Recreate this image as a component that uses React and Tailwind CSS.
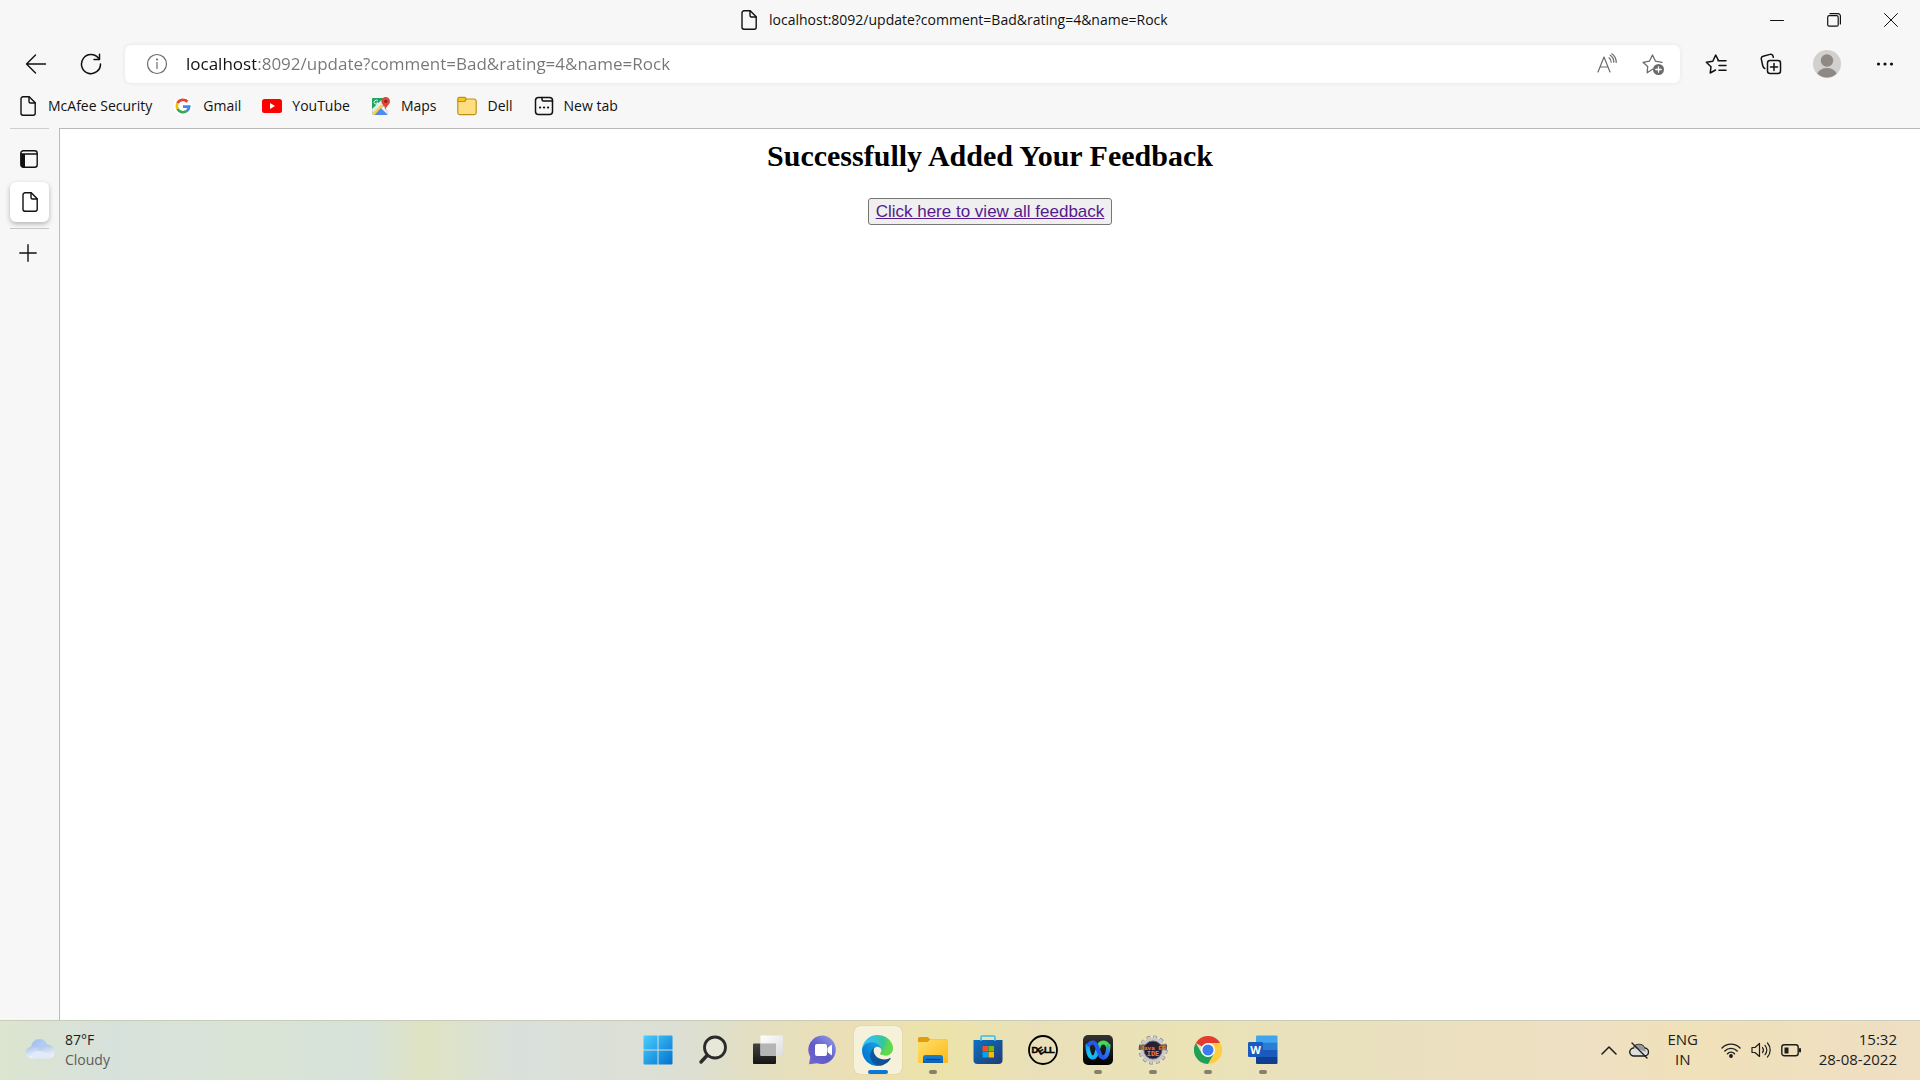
const icon = {
  fill: "none",
  stroke: "currentColor",
  strokeLinecap: "round",
  strokeLinejoin: "round",
  "aria-hidden": true,
};

function PageIcon({ className = "" }) {
  return (
    <svg {...icon} viewBox="0 0 20 20" strokeWidth="1.4" className={"h-5 w-5 shrink-0 " + className}>
      <path d="M5 .8h6.2l6 6V17.200a2 2 0 0 1-2 2H5a2 2 0 0 1-2-2V2.800a2 2 0 0 1 2-2Z" />
      <path d="M11 1v4.500a1.500 1.500 0 0 0 1.500 1.500H17" />
    </svg>
  );
}

function BackIcon() {
  return (
    <svg {...icon} viewBox="0 0 22 22" strokeWidth="1.400" className="h-[22px] w-[22px]">
      <path d="M10.500 2 1.500 11l9 9M1.500 11H20.500" />
    </svg>
  );
}

function RefreshIcon() {
  return (
    <svg {...icon} viewBox="0 0 22 22" strokeWidth="1.500" className="h-[22px] w-[22px]">
      <path d="M20.500 11A9.500 9.500 0 1 1 18.600 5.400M19.500 1.200v5.300h-5.500" />
    </svg>
  );
}

function InfoIcon() {
  return (
    <svg {...icon} viewBox="0 0 22 22" strokeWidth="1.200" className="h-[22px] w-[22px]">
      <circle cx="11" cy="11" r="9.500" />
      <path d="M11 9.500v6" />
      <circle cx="11" cy="6.500" r=".5" fill="currentColor" />
    </svg>
  );
}

function ReadAloudIcon() {
  return (
    <svg {...icon} viewBox="0 0 22 22" strokeWidth="1.200" className="h-[22px] w-[22px]">
      <path d="M2 19 8 4l6 15M4 14h8M13 4.800c1.400 1 2.200 2.600 2.200 4.400M14.200 2.200c2.400 1.500 3.600 4 3.600 7M15.800.8c2.900 1.900 4.400 4.900 4.400 8.700" />
    </svg>
  );
}

const STAR = "M10.500 16.200 5.200 19.800 5.700 13.500 1 9.300 7.400 8.200 10.500 2 13.500 8.200 20 9.300";

function StarPlusIcon() {
  return (
    <svg {...icon} viewBox="0 0 22 22" strokeWidth="1.300" className="h-[22px] w-[22px] overflow-visible">
      <path d={STAR} />
      <circle cx="16.500" cy="16.500" r="5.500" fill="currentColor" stroke="none" />
      <path d="M16.500 13.800v5.400M13.800 16.500h5.400" stroke="#fff" />
    </svg>
  );
}

function FavoritesIcon() {
  return (
    <svg {...icon} viewBox="0 0 22 22" strokeWidth="1.500" className="h-[22px] w-[22px]">
      <path d="M10.500 17 5.200 20l.8-6.300L1.300 9.300l6.500-1L10.700 2l2.700 5.300M13 7.800h8M14 12.500h7M14 17.200h7" />
    </svg>
  );
}

function CollectionsIcon() {
  return (
    <svg {...icon} viewBox="0 0 22 22" strokeWidth="1.500" className="h-[22px] w-[22px]">
      <rect x="7.500" y="7.500" width="13" height="13" rx="2.500" />
      <path d="M14 10.500v7M10.500 14h7M4.800 15.500C3.500 15 3 14 2.700 12.500L1.300 6.200C1 4.800 1.700 3.700 3.200 3.300L10 1.400c1.500-.4 2.700.3 3 1.700l.3 1.200" />
    </svg>
  );
}

function AvatarIcon() {
  return (
    <svg viewBox="0 0 28 28" className="h-7 w-7" aria-hidden="true">
      <circle cx="14" cy="14" r="14" fill="#d2d0ce" />
      <circle cx="14" cy="10.500" r="6.200" fill="#8e8985" />
      <path d="M4.300 23.500C6 20 9.500 18 14 18s8 2 9.700 5.500A14 14 0 0 1 4.300 23.500Z" fill="#8e8985" />
    </svg>
  );
}

function GoogleIcon() {
  return (
    <svg viewBox="0 0 20 20" className="h-5 w-5" fill="none" strokeWidth="2.700" aria-hidden="true">
      <circle cx="10" cy="10" r="9.500" fill="#fff" />
      <path d="M14.500 5.700A6.200 6.200 0 0 0 4.500 7.200" stroke="#ea4335" />
      <path d="M4.500 7.200a6.200 6.200 0 0 0 0 5.600" stroke="#fbbc05" />
      <path d="M4.500 12.800a6.200 6.200 0 0 0 9.500 2" stroke="#34a853" />
      <path d="M13.900 14.900a6.200 6.200 0 0 0 2.300-4.300H10" stroke="#4285f4" />
    </svg>
  );
}

function YouTubeIcon() {
  return (
    <svg viewBox="0 0 20 20" className="h-5 w-5" aria-hidden="true">
      <rect y="3" width="20" height="14" rx="2.500" fill="#f00" />
      <path d="m8 7 5 3-5 3Z" fill="#fff" />
    </svg>
  );
}

function MapsIcon() {
  return (
    <svg viewBox="0 0 20 20" className="h-5 w-5" aria-hidden="true">
      <path d="M1 3a1 1 0 0 1 1-1h12v7L2 18.500a1 1 0 0 1-1-1Z" fill="#1fa463" />
      <path d="M1 13 10.500 4l3 4L1.500 19Z" fill="#e8eaed" />
      <path d="m1 17.500 9-9 2 2-7 8.500H2Z" fill="#fdd043" />
      <path d="m10 12 7 7H3.500Z" fill="#4d8bf5" />
      <path d="m12 10 5 4.500V19Z" fill="#dfe2e6" />
      <path d="M14.700 1a4.300 4.300 0 0 1 4.300 4.300c0 3.500-3.500 4-4.300 8.700-.8-4.700-4.300-5.200-4.300-8.700A4.300 4.300 0 0 1 14.700 1Z" fill="#e1443a" />
      <circle cx="14.700" cy="5.200" r="1.500" fill="#7d231e" />
      <path d="M6.800 5A2 2 0 1 0 7 7H5.300" fill="none" stroke="#fff" />
    </svg>
  );
}

function FolderMark() {
  return (
    <svg viewBox="0 0 20 20" className="h-5 w-5" stroke="#be9117" strokeWidth="1.200" aria-hidden="true">
      <path d="M.8 4v12.500a2.200 2.200 0 0 0 2.200 2.200h14a2.200 2.200 0 0 0 2.200-2.200V5.200A2.200 2.200 0 0 0 17 3h-7Z" fill="#ffde81" />
      <path d="M.8 5.500V3A1.700 1.700 0 0 1 2.500 1.300h5A1.500 1.500 0 0 1 9 2.500c0 1.500-.8 3-2.200 3Z" fill="#fcc41f" />
    </svg>
  );
}

function NewTabIcon() {
  return (
    <svg {...icon} viewBox="0 0 20 20" strokeWidth="1.500" className="h-5 w-5">
      <rect x="1.500" y="1.500" width="17" height="17" rx="3" />
      <path d="M8 1.500v2a1.500 1.500 0 0 0 1.500 1.500h9" />
      <path d="M6 11.500h.1M10 11.500h.1M14 11.500h.1" strokeWidth="2.200" />
    </svg>
  );
}

const bookmarks = [
  { name: "McAfee Security", Icon: PageIcon },
  { name: "Gmail", Icon: GoogleIcon },
  { name: "YouTube", Icon: YouTubeIcon },
  { name: "Maps", Icon: MapsIcon },
  { name: "Dell", Icon: FolderMark },
  { name: "New tab", Icon: NewTabIcon },
];

function TitleBar() {
  return (
    <header className="grid h-10 grid-cols-[1fr_auto_1fr] items-center">
      <span />
      <div className="flex min-w-[442px] items-center gap-2.5 text-sm">
        <PageIcon />
        <span>localhost:8092/update?comment=Bad&amp;rating=4&amp;name=Rock</span>
      </div>
      <div className="flex justify-end">
        <button aria-label="Minimize" className="flex h-10 w-[57px] items-center justify-center">
          <svg {...icon} viewBox="0 0 14 14" className="h-3.5 w-3.5"><path d="M.5 7.500h13" /></svg>
        </button>
        <button aria-label="Restore" className="flex h-10 w-[57px] items-center justify-center">
          <svg {...icon} viewBox="0 0 14 14" strokeWidth="1.200" className="h-3.5 w-3.5">
            <rect x=".7" y="2.700" width="10.500" height="10.500" rx="1.500" />
            <path d="M3 .7h8a2.400 2.400 0 0 1 2.400 2.400V11" />
          </svg>
        </button>
        <button aria-label="Close" className="flex h-10 w-[58px] items-center justify-center">
          <svg {...icon} viewBox="0 0 14 14" className="h-3.5 w-3.5"><path d="m.5.500 13 13M13.500.500l-13 13" /></svg>
        </button>
      </div>
    </header>
  );
}

function Toolbar() {
  const tool = "flex h-9 w-[55px] items-center justify-center";
  return (
    <div className="flex h-12 items-center pl-2">
      <button aria-label="Back" className={tool}><BackIcon /></button>
      <button aria-label="Refresh" className={tool}><RefreshIcon /></button>
      <div className="ml-[7px] mr-2 flex h-[38px] flex-1 items-center rounded-md bg-white pl-[21px] pr-4 text-[#6b6b6b] shadow-[0_0_5px_rgba(0,0,0,0.08)]">
        <button aria-label="Site information" className="mr-[18px]"><InfoIcon /></button>
        <input
          aria-label="Address"
          defaultValue="localhost:8092/update?comment=Bad&rating=4&name=Rock"
          className="min-w-0 flex-1 bg-[linear-gradient(90deg,#111_70px,#767676_70px)] bg-clip-text text-[17px] leading-7 text-transparent outline-none"
        />
        <div className="flex gap-6">
          <button aria-label="Read aloud"><ReadAloudIcon /></button>
          <button aria-label="Add to favorites"><StarPlusIcon /></button>
        </div>
      </div>
      <button aria-label="Favorites" className={tool}><FavoritesIcon /></button>
      <button aria-label="Collections" className={tool}><CollectionsIcon /></button>
      <button aria-label="Profile" className="flex h-9 w-[58px] items-center justify-center"><AvatarIcon /></button>
      <button aria-label="Settings and more" className="mr-1.5 flex h-9 w-[58px] items-center justify-center">
        <svg viewBox="0 0 18 18" className="h-[18px] w-[18px]" fill="currentColor" aria-hidden="true">
          <circle cx="2.500" cy="9" r="1.600" /><circle cx="9" cy="9" r="1.600" /><circle cx="15.500" cy="9" r="1.600" />
        </svg>
      </button>
    </div>
  );
}

function Bookmarks() {
  return (
    <nav aria-label="Bookmarks" className="flex h-10 items-center gap-[21px] px-[18px] pb-1 text-sm">
      {bookmarks.map(({ name, Icon }) => (
        <a key={name} href="#" className="flex items-center gap-2.5">
          <Icon />
          {name}
        </a>
      ))}
    </nav>
  );
}

function TabRail() {
  return (
    <aside className="flex w-[59px] shrink-0 flex-col items-start pl-2.5">
      <div className="h-px w-[39px] bg-[#cfcfcf]" />
      <button aria-label="Tab actions" className="mt-[11px] flex h-[38px] w-[39px] items-center justify-center pr-0.5">
        <svg {...icon} viewBox="0 0 18 18" strokeWidth="1.400" className="h-[18px] w-[18px]">
          <rect x=".8" y=".8" width="16.400" height="16.400" rx="2.500" />
          <path d="M1 4h16" />
          <path d="M1 4h4v13H3a2 2 0 0 1-2-2Z" fill="currentColor" stroke="none" />
        </svg>
      </button>
      <button aria-label="localhost:8092" className="mt-1 flex h-10 w-[39px] items-center justify-center rounded-md bg-white shadow-[0_2px_5px_rgba(0,0,0,0.28)]">
        <PageIcon />
      </button>
      <div className="mt-1.5 h-px w-[39px] bg-[#c8c8c8]" />
      <button aria-label="New tab" className="mt-[5px] flex h-[38px] w-[39px] items-center justify-center pr-1">
        <svg {...icon} viewBox="0 0 18 18" strokeWidth="1.400" className="h-[18px] w-[18px]"><path d="M9 .8v16.400M.8 9h16.400" /></svg>
      </button>
    </aside>
  );
}

function StartIcon() {
  return (
    <svg viewBox="0 0 30 30" className="h-[30px] w-[30px]" aria-hidden="true">
      <defs>
        <linearGradient id="start" gradientUnits="userSpaceOnUse" x1="0" y1="0" x2="30" y2="30">
          <stop stopColor="#4bd0ff" /><stop offset="1" stopColor="#0070cf" />
        </linearGradient>
      </defs>
      <path d="M.5 1.500a1 1 0 0 1 1-1H14.500v14H.5ZM15.500.5h13a1 1 0 0 1 1 1v13h-14ZM.5 15.500h14v14h-13a1 1 0 0 1-1-1ZM15.500 15.500h14v13a1 1 0 0 1-1 1h-13Z" fill="url(#start)" />
    </svg>
  );
}

function SearchIcon() {
  return (
    <svg viewBox="0 0 30 30" className="h-[30px] w-[30px]" fill="none" stroke="#2b2b2b" strokeLinecap="round" aria-hidden="true">
      <circle cx="17" cy="12.500" r="10.500" fill="#ffffff40" strokeWidth="2.800" />
      <path d="m9 20.500-6 6.500" strokeWidth="3.400" />
    </svg>
  );
}

function TaskViewIcon() {
  return (
    <svg viewBox="0 0 30 30" className="h-[30px] w-[30px]" aria-hidden="true">
      <defs>
        <linearGradient id="tvDark" x2="0" y2="1"><stop stopColor="#444" /><stop offset="1" stopColor="#151515" /></linearGradient>
        <linearGradient id="tvLight" x2="1" y2="1"><stop stopColor="#fff" /><stop offset="1" stopColor="#dcdcdc" /></linearGradient>
      </defs>
      <rect y="8.500" width="23" height="20.500" rx="1" fill="url(#tvDark)" />
      <rect x="7.500" y=".5" width="22.500" height="20.500" rx="1" fill="url(#tvLight)" />
      <path d="M7.500 8.500H23V21H8.500a1 1 0 0 1-1-1Z" fill="#b5b5b5" />
    </svg>
  );
}

function ChatIcon() {
  return (
    <svg viewBox="0 0 30 30" className="h-[30px] w-[30px]" aria-hidden="true">
      <defs>
        <linearGradient id="chat" x1="0" y1="1" x2=".8" y2="0"><stop stopColor="#7267cf" /><stop offset=".5" stopColor="#5f5bc4" /><stop offset="1" stopColor="#8c95e8" /></linearGradient>
      </defs>
      <path d="M15 .5A14.300 14.300 0 1 1 9 28.300L1 29.300l1.300-7.300A14.300 14.300 0 0 1 15 .5Z" fill="url(#chat)" />
      <rect x="7" y="9" width="12" height="12" rx="2" fill="#fff" />
      <path d="m20 13 3.500-2.800v9.600L20 17Z" fill="#fff" stroke="#fff" strokeLinejoin="round" />
    </svg>
  );
}

function EdgeIcon() {
  return (
    <svg viewBox="0 0 256 256" className="h-[31px] w-[31px]" aria-hidden="true">
      <defs>
        <linearGradient id="edgeA" x1="63" y1="178" x2="241" y2="178" gradientUnits="userSpaceOnUse"><stop stopColor="#0c59a4" /><stop offset="1" stopColor="#114a8b" /></linearGradient>
        <linearGradient id="edgeB" x1="157" y1="100" x2="46" y2="222" gradientUnits="userSpaceOnUse"><stop stopColor="#1b9de2" /><stop offset=".2" stopColor="#1595df" /><stop offset=".7" stopColor="#0680d7" /><stop offset="1" stopColor="#0078d4" /></linearGradient>
        <radialGradient id="edgeC" cx="26" cy="45" r="205" gradientUnits="userSpaceOnUse" gradientTransform="matrix(1 0 0 .8 0 10)"><stop stopColor="#35c1f1" /><stop offset=".4" stopColor="#34c1dd" /><stop offset=".75" stopColor="#36c793" /><stop offset="1" stopColor="#62d84c" /></radialGradient>
      </defs>
      <path fill="url(#edgeA)" d="M231 190.500c-3.400 1.800-6.900 3.400-10.500 4.700a101.900 101.900 0 0 1-35.900 6.400c-47.300 0-88.500-32.500-88.500-74.300a31.500 31.500 0 0 1 16.400-27.300c-42.800 1.800-53.800 46.400-53.800 72.500 0 74 68.100 81.400 82.800 81.400 7.900 0 19.800-2.300 27-4.600l1.300-.4a128.300 128.300 0 0 0 66.600-52.800 4 4 0 0 0-5.400-5.600Z" />
      <path fill="url(#edgeB)" d="M105.700 241.400a79.200 79.200 0 0 1-22.700-21.300 80.700 80.700 0 0 1 29.500-120c3.200-1.500 8.500-4.100 15.600-4a32.400 32.400 0 0 1 25.700 13 31.900 31.900 0 0 1 6.300 18.700c0-.2 24.500-79.600-80-79.600-43.900 0-80 41.700-80 78.200a130.200 130.200 0 0 0 12.100 56 128 128 0 0 0 156.400 67 75.600 75.600 0 0 1-62.800-8Z" />
      <path fill="url(#edgeC)" d="M152.300 148.900c-.8 1-3.300 2.500-3.300 5.600 0 2.600 1.700 5.100 4.700 7.200 14.400 10 41.500 8.700 41.600 8.700a59.600 59.600 0 0 0 30.300-8.300 61.400 61.400 0 0 0 30.400-52.900c.3-22.400-8-37.300-11.300-43.900C223.500 23.900 177.700 0 128 0A128 128 0 0 0 0 126.200c.5-36.500 36.800-66 80-66 3.500 0 23.500.3 42 10a72.600 72.600 0 0 1 30.900 29.300c6.100 10.600 7.200 24.100 7.200 29.500s-2.700 13.300-7.800 19.900Z" />
    </svg>
  );
}

function ExplorerIcon() {
  return (
    <svg viewBox="0 0 30 30" className="h-[30px] w-[30px]" aria-hidden="true">
      <defs>
        <linearGradient id="folder" x2="1" y2="1"><stop stopColor="#ffdf70" /><stop offset="1" stopColor="#fdb913" /></linearGradient>
        <linearGradient id="shelf" x2="0" y2="1"><stop stopColor="#1683d8" /><stop offset="1" stopColor="#0d5fab" /></linearGradient>
      </defs>
      <path d="M0 3.500a1.500 1.500 0 0 1 1.500-1.500h8l3 2.500H28.500A1.500 1.500 0 0 1 30 6v6H0Z" fill="#e39c0c" />
      <path d="M0 7h9.500l3-2.500h16A1.500 1.500 0 0 1 30 6v21a1 1 0 0 1-1 1H1a1 1 0 0 1-1-1Z" fill="url(#folder)" />
      <path d="M5 28v-5.500a2.500 2.500 0 0 1 2.500-2.500h15a2.500 2.500 0 0 1 2.500 2.500V28Z" fill="url(#shelf)" />
      <path d="M8.500 24.500h13" stroke="#0b3f7a" strokeLinecap="round" />
    </svg>
  );
}

function StoreIcon() {
  return (
    <svg viewBox="0 0 30 30" className="h-[30px] w-[30px]" aria-hidden="true">
      <defs><linearGradient id="store" x2="1" y2="1"><stop stopColor="#0b72c4" /><stop offset="1" stopColor="#223a72" /></linearGradient></defs>
      <path d="M.5 5h29v20a4 4 0 0 1-4 4h-21a4 4 0 0 1-4-4Z" fill="url(#store)" />
      <path d="M8 6V2.500A1.500 1.500 0 0 1 9.500 1h11A1.500 1.500 0 0 1 22 2.500V6" fill="none" stroke="#2fc0f5" strokeWidth="1.600" />
      <path d="M9.500 11H15v5.500H9.500Z" fill="#f25022" /><path d="M15.500 11H21v5.500h-5.500Z" fill="#7fba00" />
      <path d="M9.500 17H15v5.500H9.500Z" fill="#00a4ef" /><path d="M15.500 17H21v5.500h-5.500Z" fill="#ffb900" />
    </svg>
  );
}

function DellIcon() {
  return (
    <svg viewBox="0 0 30 30" className="h-[30px] w-[30px]" aria-hidden="true">
      <circle cx="15" cy="15" r="14" fill="none" stroke="#000" strokeWidth="1.800" />
      <g fontFamily="Liberation Sans, sans-serif" fontWeight="700" fontSize="9.500" stroke="#000" strokeWidth=".4">
        <text x="3.500 12.300 16 21" y="18.300 20.300 18.300 18.300" rotate="0 -35 0 0">DELL</text>
      </g>
    </svg>
  );
}

function WebexIcon() {
  return (
    <svg viewBox="0 0 30 30" className="h-[30px] w-[30px]" aria-hidden="true">
      <defs>
        <linearGradient id="wxA" gradientUnits="userSpaceOnUse" x1="4" y1="10" x2="15" y2="22"><stop stopColor="#1b8fe8" /><stop offset=".5" stopColor="#14c8ee" /><stop offset="1" stopColor="#20a1f3" /></linearGradient>
        <linearGradient id="wxB" gradientUnits="userSpaceOnUse" x1="16" y1="22" x2="26" y2="9"><stop stopColor="#2557f0" /><stop offset=".6" stopColor="#2c7af0" /><stop offset="1" stopColor="#35d44e" /></linearGradient>
        <linearGradient id="wxBg" x2="0" y2="1"><stop stopColor="#343434" /><stop offset="1" stopColor="#000" /></linearGradient>
      </defs>
      <rect width="30" height="30" rx="5" fill="url(#wxBg)" />
      <g fill="none" strokeWidth="4.200" strokeLinecap="round">
        <path d="M15 13C16 9.500 17.500 7.500 20 7.500c2.500 0 4 1 4.500 3" stroke="#42db51" />
        <path d="M4.500 10.500C5 18 7 22.500 10 22.500c3 0 4-6 5.500-10.500" stroke="url(#wxA)" />
        <path d="M20 22.500c3 0 5-4 5.500-12" stroke="url(#wxB)" />
        <path d="M6 9.500c1-1.500 2.500-2 4-2 5 0 5.500 15 10 15" stroke="#2459f0" />
      </g>
    </svg>
  );
}

function EclipseIcon() {
  return (
    <svg viewBox="0 0 30 30" className="h-[30px] w-[30px]" aria-hidden="true">
      <circle cx="15" cy="15" r="12.500" fill="none" stroke="#7d7d7d" strokeWidth="4" strokeDasharray="3.400 3.145" />
      <circle cx="15" cy="15" r="12.300" fill="none" stroke="#cfcfcf" strokeWidth="3.200" strokeDasharray="2.600 3.840" strokeDashoffset="-.4" />
      <circle cx="15" cy="15" r="10.500" fill="#28223c" stroke="#c9c9c9" strokeWidth="3" />
      <circle cx="15" cy="15" r="9" fill="#251e3d" stroke="#656575" />
      <rect x="1" y="9.500" width="28" height="5.500" fill="#352021" opacity=".6" />
      <g fill="#f0802b" fontFamily="Liberation Mono, monospace" fontWeight="700" textAnchor="middle">
        <text x="15" y="14.500" fontSize="6">Java EE</text>
        <text x="15" y="21" fontSize="7">IDE</text>
      </g>
    </svg>
  );
}

function ChromeIcon() {
  return (
    <svg viewBox="0 0 48 48" className="h-7 w-7" aria-hidden="true">
      <path d="M24 24 3.200 12A24 24 0 0 1 44.800 12Z" fill="#e33b2e" />
      <path d="M24 12h20.800A24 24 0 0 1 24 48l10.400-18Z" fill="#ffcd40" />
      <path d="M3.200 12A24 24 0 0 0 24 48l10.400-18L24 34 13.600 30Z" fill="#229f56" />
      <circle cx="24" cy="24" r="12" fill="#fff" />
      <circle cx="24" cy="24" r="9.500" fill="#3b7ded" />
    </svg>
  );
}

function WordIcon() {
  return (
    <svg viewBox="0 0 30 30" className="h-[30px] w-[30px]" aria-hidden="true">
      <path d="M8 1.500a1 1 0 0 1 1-1h19.500a1 1 0 0 1 1 1V8H8Z" fill="#41a5ee" />
      <path d="M8 7.700h21.500V15H8Z" fill="#2b7cd3" /><path d="M8 15h21.500v7H8Z" fill="#185abd" />
      <path d="M8 22h21.500v6a1 1 0 0 1-1 1H9a1 1 0 0 1-1-1Z" fill="#103f91" />
      <rect y="7" width="15" height="15" rx="1.200" fill="#185abd" />
      <text x="7.500" y="18.500" fontSize="11" fontWeight="700" textAnchor="middle" fill="#fff" fontFamily="Open Sans, sans-serif">W</text>
    </svg>
  );
}

const apps = [
  { name: "Start", Icon: StartIcon },
  { name: "Search", Icon: SearchIcon },
  { name: "Task view", Icon: TaskViewIcon },
  { name: "Chat", Icon: ChatIcon },
  { name: "Microsoft Edge", Icon: EdgeIcon, active: true },
  { name: "File Explorer", Icon: ExplorerIcon, running: true },
  { name: "Microsoft Store", Icon: StoreIcon },
  { name: "Dell", Icon: DellIcon },
  { name: "Webex", Icon: WebexIcon, running: true },
  { name: "Eclipse", Icon: EclipseIcon, running: true },
  { name: "Chrome", Icon: ChromeIcon, running: true },
  { name: "Word", Icon: WordIcon, running: true },
];

function Taskbar() {
  return (
    <footer className="grid h-[60px] shrink-0 grid-cols-[1fr_auto_1fr] items-center border-t border-[#cbcdbb] bg-[linear-gradient(90deg,#dce5cf_0%,#d7e1dc_6%,#d9e4d5_13%,#d6e2da_19%,#dfe3c3_22%,#d9e0dc_27%,#dddfd2_36%,#e5dfbf_40%,#ebdfb6_44%,#ece3a9_49%,#e9e0ba_54%,#ebe3b6_62%,#e9e0be_70%,#efe0c3_83%,#efe1b9_88%,#efdfc4_100%)] pb-px text-[15px] leading-5 text-[#1d1d1b]">
      <button className="flex items-center gap-2.5 justify-self-start pl-[25px] text-left text-sm leading-5">
        <svg viewBox="0 0 30 24" className="h-6 w-[30px]" aria-hidden="true">
          <defs>
            <linearGradient id="cloudA" x2="1" y2="1"><stop stopColor="#9dbdf0" /><stop offset="1" stopColor="#c6daf8" /></linearGradient>
            <linearGradient id="cloudB" x2=".3" y2="1"><stop stopColor="#a7c0e2" /><stop offset="1" stopColor="#f0f5fd" /></linearGradient>
          </defs>
          <circle cx="14.500" cy="9.500" r="8.500" fill="url(#cloudA)" />
          <ellipse cx="7.500" cy="14.500" rx="7" ry="6" fill="url(#cloudB)" />
          <ellipse cx="22.500" cy="13.500" rx="7.500" ry="7" fill="url(#cloudB)" />
          <path d="M7 14.500 15 13l11 3v3.500a7 7 0 0 1-4 1H7.500Z" fill="#e1eafa" />
        </svg>
        <span>
          <span className="block">87°F</span>
          <span className="block text-[#5a5d58]">Cloudy</span>
        </span>
      </button>
      <div className="flex gap-[7px]">
        {apps.map(({ name, Icon, active, running }) => (
          <button
            key={name}
            aria-label={name}
            className={"relative flex h-12 w-12 items-center justify-center rounded-md " + (active ? "bg-[#f6f1da] shadow-[0_0_1px_rgba(0,0,0,0.25)]" : "")}
          >
            <Icon />
            {active && <span className="absolute bottom-0 left-3.5 h-1 w-5 rounded-full bg-[#0a78d4]" />}
            {running && <span className="absolute bottom-0 left-5 h-1 w-2 rounded-full bg-[#85806b]" />}
          </button>
        ))}
      </div>
      <div className="flex items-center justify-self-end pr-[23px]">
        <button aria-label="Show hidden icons" className="mr-3">
          <svg {...icon} viewBox="0 0 16 16" strokeWidth="1.500" className="h-4 w-4"><path d="m1 12 7-7 7 7" /></svg>
        </button>
        <button aria-label="OneDrive" className="mr-[18px]">
          <svg {...icon} viewBox="0 0 20 20" strokeWidth="1.400" className="h-5 w-5">
            <path d="M5 16a4 4 0 0 1-.5-8A6 6 0 0 1 15.500 8a4 4 0 0 1 0 8Z" fill="#dedede" />
            <path d="M4.500 8A6 6 0 0 1 15.500 8L17 12 9 9Z" fill="#999" stroke="none" />
            <path d="m3 3 15 15" />
          </svg>
        </button>
        <button className="mr-[22px] w-8 pb-0.5 text-center"><span className="block">ENG</span><span className="block">IN</span></button>
        <button aria-label="Network, volume and battery" className="mr-[18px] flex gap-2.5">
          <svg {...icon} viewBox="0 0 20 20" strokeWidth="1.400" className="h-5 w-5">
            <path d="M1 8a12.500 12.500 0 0 1 18 0M3.800 11a8.700 8.700 0 0 1 12.400 0M6.500 13.700a5 5 0 0 1 7 0" />
            <circle cx="10" cy="16" r="1.200" fill="currentColor" />
          </svg>
          <svg {...icon} viewBox="0 0 20 20" strokeWidth="1.200" className="h-5 w-5">
            <path d="M1 7.500h3l4.500-4v13l-4.500-4H1ZM11.500 7.500a4 4 0 0 1 0 5M14 5.300a7 7 0 0 1 0 9.400M16.500 3a10.500 10.500 0 0 1 0 14" />
          </svg>
          <svg {...icon} viewBox="0 0 20 20" strokeWidth="1.400" className="h-5 w-5">
            <rect x=".8" y="4.800" width="16.400" height="11" rx="2.500" />
            <path d="M3.500 7.500h4v6h-4Z" fill="currentColor" stroke="none" />
            <path d="M19 9v2.500" strokeWidth="2" />
          </svg>
        </button>
        <button className="pb-0.5 text-right"><span className="block">15:32</span><span className="block">28-08-2022</span></button>
      </div>
    </footer>
  );
}

export default function App() {
  return (
    <div className="flex h-screen flex-col bg-[#f7f7f7] font-['Open_Sans','Noto_Sans',sans-serif] text-[#111]">
      <TitleBar />
      <Toolbar />
      <Bookmarks />
      <div className="flex min-h-0 flex-1">
        <TabRail />
        <main className="flex flex-1 flex-col items-center border-l border-t border-[#b9b9b9] bg-white pt-2.5 text-black">
          <h1 className="font-['Liberation_Serif',serif] text-[30px] leading-[34px] font-bold">Successfully Added Your Feedback</h1>
          <button className="mt-[25px] rounded-[3px] border border-[#767676] bg-[#efefef] px-[7px] py-px font-['Liberation_Sans',sans-serif] text-[17px] leading-[23px]">
            <a href="#" className="text-[#551a8b] underline">Click here to view all feedback</a>
          </button>
        </main>
      </div>
      <Taskbar />
    </div>
  );
}
